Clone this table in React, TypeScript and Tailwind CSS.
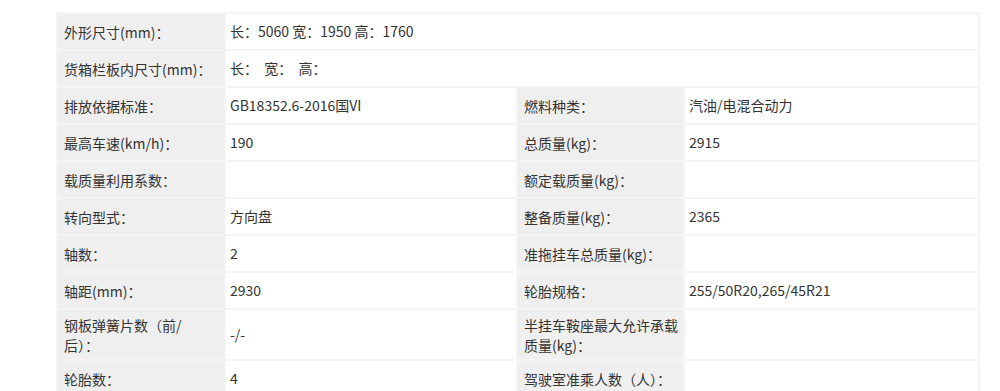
import React from "react";

type Row =
  | { type: "wide"; label: string; value: string }
  | { type: "pair"; l1: React.ReactNode; v1: string; l2: React.ReactNode; v2: string; tall?: boolean };

const rows: Row[] = [
  { type: "wide", label: "外形尺寸(mm)：", value: "长：5060 宽：1950 高：1760" },
  { type: "wide", label: "货箱栏板内尺寸(mm)：", value: "长：  宽：  高：" },
  { type: "pair", l1: "排放依据标准：", v1: "GB18352.6-2016国VI", l2: "燃料种类：", v2: "汽油/电混合动力" },
  { type: "pair", l1: "最高车速(km/h)：", v1: "190", l2: "总质量(kg)：", v2: "2915" },
  { type: "pair", l1: "载质量利用系数：", v1: "", l2: "额定载质量(kg)：", v2: "" },
  { type: "pair", l1: "转向型式：", v1: "方向盘", l2: "整备质量(kg)：", v2: "2365" },
  { type: "pair", l1: "轴数：", v1: "2", l2: "准拖挂车总质量(kg)：", v2: "" },
  { type: "pair", l1: "轴距(mm)：", v1: "2930", l2: "轮胎规格：", v2: "255/50R20,265/45R21" },
  {
    type: "pair",
    l1: (
      <>
        钢板弹簧片数（前/
        <br />
        后）：
      </>
    ),
    v1: "-/-",
    l2: (
      <>
        半挂车鞍座最大允许承载
        <br />
        质量(kg)：
      </>
    ),
    v2: "",
    tall: true,
  },
  { type: "pair", l1: "轮胎数：", v1: "4", l2: "驾驶室准乘人数（人）：", v2: "" },
];

const labelCls = "bg-[#efefef] pl-[6px] flex items-center leading-[20px] whitespace-nowrap";
const valueCls = "bg-white pl-[4px] flex items-center whitespace-pre";

export default function App() {
  return (
    <div
      className="w-[1000px] h-[391px] bg-white overflow-hidden pt-[12px] pl-[56px] text-[14px] text-[#333]"
      style={{ fontFamily: '"Noto Sans CJK SC", "Noto Sans", sans-serif' }}
    >
      <div className="inline-grid grid-cols-[166px_290px_165px_293px] gap-[2px] p-[2px] bg-[#f4f4f4]">
        {rows.map((r, i) => {
          if (r.type === "wide") {
            return (
              <React.Fragment key={i}>
                <div className={`${labelCls} h-[35px]`}>{r.label}</div>
                <div className={`${valueCls} col-span-3 h-[35px]`}>{r.value}</div>
              </React.Fragment>
            );
          }
          const h = r.tall ? "h-[49px]" : "h-[35px]";
          return (
            <React.Fragment key={i}>
              <div className={`${labelCls} ${h}`}>
                <div>{r.l1}</div>
              </div>
              <div className={`${valueCls} ${h}`}>{r.v1}</div>
              <div className={`${labelCls} ${h}`}>
                <div>{r.l2}</div>
              </div>
              <div className={`${valueCls} ${h}`}>{r.v2}</div>
            </React.Fragment>
          );
        })}
      </div>
    </div>
  );
}
